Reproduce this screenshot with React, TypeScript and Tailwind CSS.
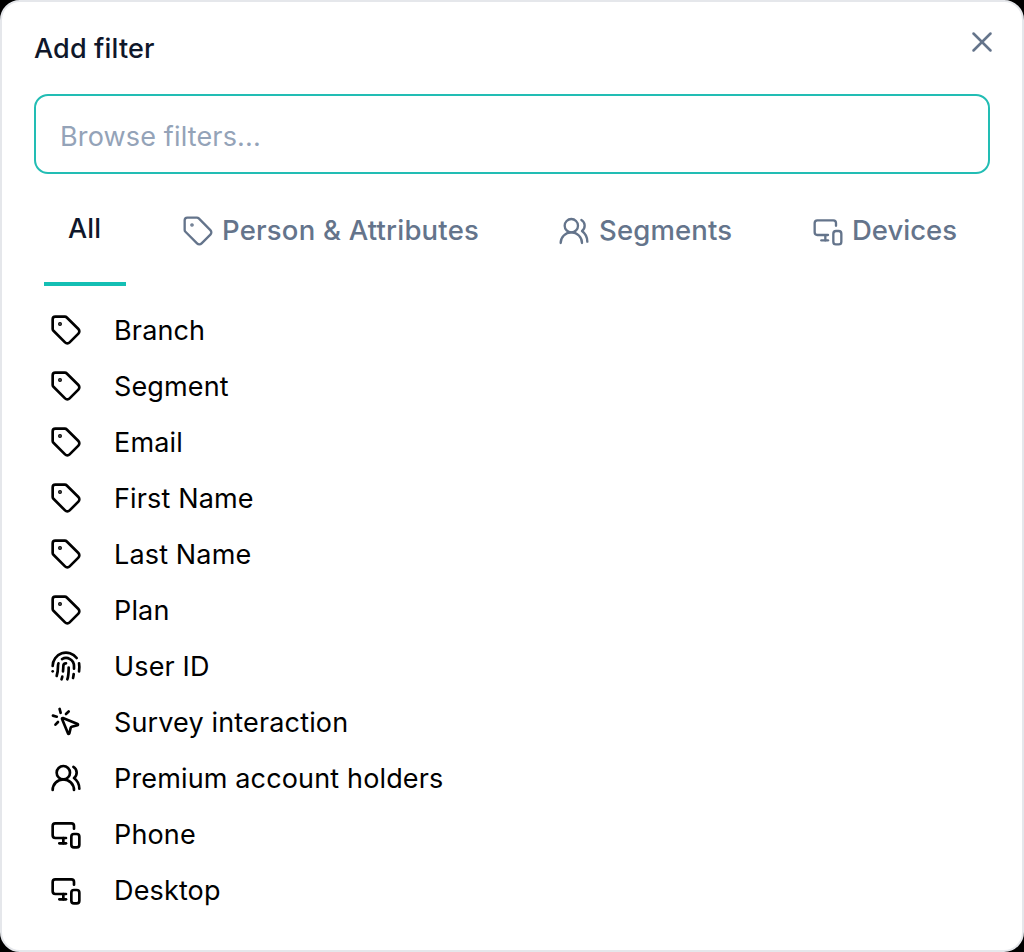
import { Fingerprint, MonitorSmartphone, MousePointerClick, Tag, UsersRound, X } from "lucide-react";

const filters = [
  { label: "Branch", icon: Tag },
  { label: "Segment", icon: Tag },
  { label: "Email", icon: Tag },
  { label: "First Name", icon: Tag },
  { label: "Last Name", icon: Tag },
  { label: "Plan", icon: Tag },
  { label: "User ID", icon: Fingerprint },
  { label: "Survey interaction", icon: MousePointerClick },
  { label: "Premium account holders", icon: UsersRound },
  { label: "Phone", icon: MonitorSmartphone },
  { label: "Desktop", icon: MonitorSmartphone },
];

const tabs = [
  { label: "Person & Attributes", icon: Tag, className: "ml-[56px] w-[297px] tracking-[0.2px]" },
  { label: "Segments", icon: UsersRound, className: "ml-[79px] w-[174px] gap-[9px]" },
  { label: "Devices", icon: MonitorSmartphone, className: "ml-[80px] w-[144px] tracking-[0px]" },
];

export default function App() {
  return (
    <div className="h-[952px] w-[1024px] bg-black font-['Inter',sans-serif] tracking-[0.15px]">
      <div className="relative h-full rounded-[20px] border-2 border-[#e5e7eb] bg-white px-[32px] pt-[29px]">
        <h2 className="text-[27px] leading-[36px] font-medium text-[#0f172a]">Add filter</h2>
        <button className="absolute top-[23px] right-[23px] text-[#64748b]">
          <X size={34} strokeWidth={1.75} />
        </button>

        <div className="mt-[27px] flex h-[80px] items-center rounded-[14px] border-2 border-[#22bdb4] px-[24px] pt-[6px] text-[27px] text-[#94a3b8]">
          Browse filters...
        </div>

        {/* Tabs */}
        <div className="mt-[28px] ml-[10px] flex h-[84px]">
          <div className="flex h-full w-[82px] justify-center border-b-4 border-[#14bfb4] pt-[9px] pr-[1px] text-[27px] leading-[36px] font-medium text-[#0f172a]">
            All
          </div>
          {tabs.map((tab) => (
            <div key={tab.label} className={`flex h-[58px] items-center gap-[8px] text-[27.5px] font-medium text-[#64748b] ${tab.className}`}>
              <tab.icon size={32} strokeWidth={1.75} className="shrink-0" />
              <span className="whitespace-nowrap">{tab.label}</span>
            </div>
          ))}
        </div>

        <ul className="mt-[16px] ml-[16px]">
          {filters.map((item) => (
            <li key={item.label} className="flex h-[56px] items-center gap-[32px] text-[27px] text-black">
              <item.icon size={32} strokeWidth={2} className="shrink-0" />
              <span className="pt-[2px]">{item.label}</span>
            </li>
          ))}
        </ul>
      </div>
    </div>
  );
}
